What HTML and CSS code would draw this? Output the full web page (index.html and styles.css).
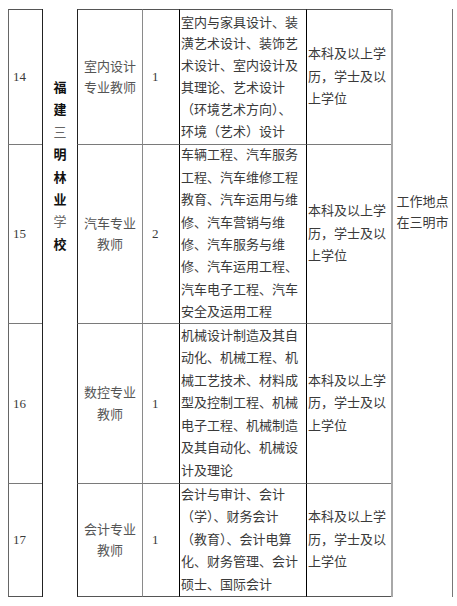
FILE: index.html
```html
<!DOCTYPE html>
<html lang="zh-CN">
<head>
<meta charset="utf-8">
<title>招聘岗位表</title>
<link rel="stylesheet" href="styles.css">
</head>
<body>
<div class="sheet">
  <!-- row 14 -->
  <div class="cell num r1 first">14</div>
  <div class="school">
    <div class="school-text">福<br>建<br><span class="thin">三</span><br>明<br>林<br>业<br><span class="thin">学</span><br>校</div>
  </div>
  <div class="cell pos r1 first">室内设计<br>专业教师</div>
  <div class="cell cnt r1 first">1</div>
  <div class="cell major r1 first tight">室内与家具设计、装<br>潢艺术设计、装饰艺<br>术设计、室内设计及<br>其理论、艺术设计<br>（环境艺术方向）、<br>环境（艺术）设计</div>
  <div class="cell edu r1 first">本科及以上学<br>历，学士及以<br>上学位</div>
  <div class="remark"><div class="remark-text">工作地点<br>在三明市</div></div>

  <!-- row 15 -->
  <div class="cell num r2">15</div>
  <div class="cell pos r2">汽车专业<br>教师</div>
  <div class="cell cnt r2">2</div>
  <div class="cell major r2">车辆工程、汽车服务<br>工程、汽车维修工程<br>教育、汽车运用与维<br>修、汽车营销与维<br>修、汽车服务与维<br>修、汽车运用工程、<br>汽车电子工程、汽车<br>安全及运用工程</div>
  <div class="cell edu r2">本科及以上学<br>历，学士及以<br>上学位</div>

  <!-- row 16 -->
  <div class="cell num r3">16</div>
  <div class="cell pos r3">数控专业<br>教师</div>
  <div class="cell cnt r3">1</div>
  <div class="cell major r3">机械设计制造及其自<br>动化、机械工程、机<br>械工艺技术、材料成<br>型及控制工程、机械<br>电子工程、机械制造<br>及其自动化、机械设<br>计及理论</div>
  <div class="cell edu r3">本科及以上学<br>历，学士及以<br>上学位</div>

  <!-- row 17 -->
  <div class="cell num r4 last">17</div>
  <div class="cell pos r4 last">会计专业<br>教师</div>
  <div class="cell cnt r4 last">1</div>
  <div class="cell major r4 last">会计与审计、会计<br>（学）、财务会计<br>（教育）、会计电算<br>化、财务管理、会计<br>硕士、国际会计</div>
  <div class="cell edu r4 last">本科及以上学<br>历，学士及以<br>上学位</div>
</div>
</body>
</html>
```

FILE: styles.css
```css
html, body {
  margin: 0;
  padding: 0;
  background: #ffffff;
}

body {
  font-family: "Liberation Serif", "Noto Sans CJK SC", serif;
  font-size: 13px;
  color: #3a3a3a;
}

.sheet {
  margin: 9px 0 0 8px;
  display: grid;
  grid-template-columns: 34px 35px 65px 37px 127px 85px 62px;
  grid-template-rows: 135px 179px 160px 114px;
  width: 445px;
}

.cell {
  box-sizing: border-box;
  border-top: 1px solid #7a7a7a;
  border-left: 1px solid #7a7a7a;
  display: flex;
  flex-direction: column;
  justify-content: center;
  line-height: 22px;
}

.cell.last {
  border-bottom: 1px solid #555555;
}

.cell.first {
  border-top: 1px solid #555555;
}

.r1 { grid-row: 1; }
.r2 { grid-row: 2; }
.r3 { grid-row: 3; }
.r4 { grid-row: 4; }

.num {
  grid-column: 1;
  border-left-color: #666666;
  padding-left: 4px;
}

.school {
  grid-column: 2;
  grid-row: 1 / 5;
  box-sizing: border-box;
  border-left: 1px solid #222222;
  display: flex;
  justify-content: center;
}

.school-text {
  margin-top: 68px;
  font-weight: bold;
  color: #111111;
  line-height: 22.4px;
  text-align: center;
}

.school-text .thin {
  font-weight: normal;
  color: #666666;
}

.pos {
  grid-column: 3;
  border-left-color: #222222;
  text-align: center;
  line-height: 21.5px;
  color: #555555;
}

.cnt {
  grid-column: 4;
  border-left-color: #8a8a8a;
  padding-left: 9px;
}

.major {
  grid-column: 5;
  border-left-color: #000000;
  padding-left: 1px;
  line-height: 22.4px;
  white-space: nowrap;
}

.major.tight {
  line-height: 21.8px;
}

.edu {
  grid-column: 6;
  border-left-color: #000000;
  padding-left: 1px;
  line-height: 22.5px;
  white-space: nowrap;
}

.remark {
  grid-column: 7;
  grid-row: 1 / 5;
  box-sizing: border-box;
  border-left: 2px solid #a8a8a8;
  border-right: 1px solid #777777;
  display: flex;
  justify-content: center;
}

.remark-text {
  margin-top: 182px;
  line-height: 21px;
  text-align: center;
  white-space: nowrap;
}
```
